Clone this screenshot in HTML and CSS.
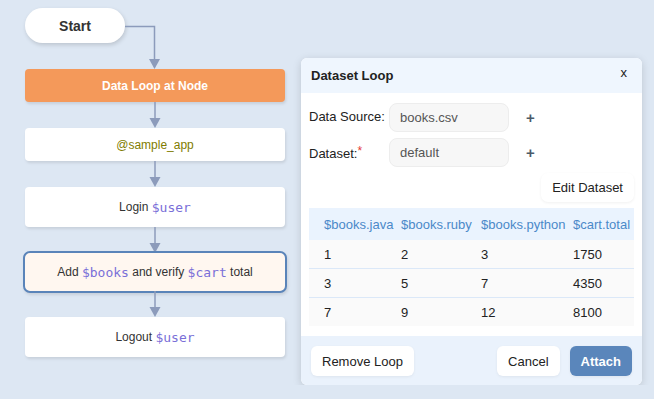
FILE: index.html
```html
<!DOCTYPE html>
<html lang="en">
<head>
  <meta charset="UTF-8">
  <meta name="viewport" content="width=device-width, initial-scale=1.0">
  <title>Dataset Loop</title>
  <link rel="stylesheet" href="styles.css">
</head>
<body>
  <div class="canvas">
    <section class="flow">
      <div class="start-row">
        <div class="start">Start</div>
        <svg class="elbow" width="36" height="61" viewBox="0 0 36 61">
          <path d="M0 18.5H29.5V52" fill="none" stroke="#8c9bbb" stroke-width="1.5"/>
          <path d="M24 51H35L29.5 61Z" fill="#8c9bbb"/>
        </svg>
      </div>
      <div class="node node-loop">Data Loop at Node</div>
      <div class="link">
        <svg width="12" height="26" viewBox="0 0 12 26">
          <path d="M6 0V17" stroke="#8c9bbb" stroke-width="1.5"/>
          <path d="M0.5 16H11.5L6 26Z" fill="#8c9bbb"/>
        </svg>
      </div>
      <div class="node node-app">@sample_app</div>
      <div class="link">
        <svg width="12" height="26" viewBox="0 0 12 26">
          <path d="M6 0V17" stroke="#8c9bbb" stroke-width="1.5"/>
          <path d="M0.5 16H11.5L6 26Z" fill="#8c9bbb"/>
        </svg>
      </div>
      <div class="node node-tall">Login&nbsp;<code>$user</code></div>
      <div class="link">
        <svg width="12" height="26" viewBox="0 0 12 26">
          <path d="M6 0V17" stroke="#8c9bbb" stroke-width="1.5"/>
          <path d="M0.5 16H11.5L6 26Z" fill="#8c9bbb"/>
        </svg>
      </div>
      <div class="node node-tall node-active">Add&nbsp;<code>$books</code>&nbsp;and verify&nbsp;<code>$cart</code>&nbsp;total</div>
      <div class="link">
        <svg width="12" height="26" viewBox="0 0 12 26">
          <path d="M6 0V17" stroke="#8c9bbb" stroke-width="1.5"/>
          <path d="M0.5 16H11.5L6 26Z" fill="#8c9bbb"/>
        </svg>
      </div>
      <div class="node node-tall">Logout&nbsp;<code>$user</code></div>
    </section>

    <section class="modal">
      <div class="modal-header">
        <h2>Dataset Loop</h2>
        <button class="close">x</button>
      </div>
      <div class="modal-body">
        <div class="field">
          <label>Data Source:</label>
          <div class="select">books.csv</div>
          <button class="add">+</button>
        </div>
        <div class="field">
          <label>Dataset:<span class="req">*</span></label>
          <div class="select">default</div>
          <button class="add">+</button>
        </div>
        <div class="edit-row">
          <button class="btn">Edit Dataset</button>
        </div>
        <table class="data">
          <colgroup>
            <col class="c1"><col class="c2"><col class="c3"><col>
          </colgroup>
          <thead>
            <tr><th>$books.java</th><th>$books.ruby</th><th>$books.python</th><th>$cart.total</th></tr>
          </thead>
          <tbody>
            <tr><td>1</td><td>2</td><td>3</td><td>1750</td></tr>
            <tr><td>3</td><td>5</td><td>7</td><td>4350</td></tr>
            <tr><td>7</td><td>9</td><td>12</td><td>8100</td></tr>
          </tbody>
        </table>
      </div>
      <div class="modal-footer">
        <button class="btn">Remove Loop</button>
        <div class="right">
          <button class="btn">Cancel</button>
          <button class="btn btn-primary">Attach</button>
        </div>
      </div>
    </section>
  </div>
</body>
</html>
```

FILE: styles.css
```css
body {
  margin: 0;
  font-family: 'Liberation Sans', Arial, sans-serif;
  background: #dde7f3;
  color: #222;
}

.canvas {
  display: flex;
  align-items: flex-start;
  gap: 16px;
  padding: 8px 0 0 25px;
}

/* flow chart */
.flow {
  width: 260px;
  display: flex;
  flex-direction: column;
}

.start-row {
  display: flex;
  align-items: flex-start;
  height: 61px;
}

.start {
  width: 100px;
  height: 35px;
  border-radius: 18px;
  background: #fff;
  box-shadow: 1px 2px 4px rgba(0, 0, 0, 0.15);
  display: flex;
  align-items: center;
  justify-content: center;
  font-size: 14px;
  font-weight: bold;
  color: #333;
}

.elbow {
  display: block;
}

.node {
  height: 33px;
  box-sizing: border-box;
  border-radius: 4px;
  background: #fff;
  box-shadow: 1px 2px 3px rgba(0, 0, 0, 0.1);
  display: flex;
  align-items: center;
  justify-content: center;
  font-size: 12px;
  color: #333;
}

.node code {
  font-family: 'DejaVu Sans Mono', monospace;
  font-size: 13px;
  color: #7a6fd8;
}

.node-loop {
  background: #f4995a;
  color: #fff;
  font-weight: bold;
}

.node-app {
  color: #7f7c00;
}

.node-tall {
  height: 40px;
}

.node-active {
  height: 42px;
  margin: -2px -2px;
  border: 2px solid #5a84b9;
  border-radius: 7px;
  background: #fff7f0;
}

.link {
  height: 26px;
  display: flex;
  justify-content: center;
}

.link svg {
  display: block;
}

/* modal */
.modal {
  width: 341px;
  margin-top: 50px;
  background: #fff;
  border-radius: 6px;
  overflow: hidden;
  box-shadow: 0 2px 8px rgba(0, 0, 0, 0.15);
}

.modal-header {
  height: 35px;
  padding: 0 10px;
  background: #eff6fe;
  display: flex;
  align-items: center;
  justify-content: space-between;
}

.modal-header h2 {
  margin: 0;
  font-size: 13px;
  font-weight: bold;
  color: #222;
}

button {
  font-family: inherit;
  font-size: 13px;
  color: #222;
  border: none;
  background: none;
  padding: 0;
  cursor: pointer;
}

.close {
  margin: -6px 5px 0 0;
  font-size: 13px;
}

.modal-body {
  padding: 10px 8px;
}

.field {
  display: flex;
  align-items: center;
  height: 29px;
  margin-bottom: 6px;
  font-size: 13px;
}

.field label {
  width: 80px;
  align-self: flex-start;
  padding-top: 6px;
}

.req {
  color: #e53935;
  vertical-align: 3px;
  font-size: 12px;
}

.select {
  width: 120px;
  height: 29px;
  box-sizing: border-box;
  padding-left: 10px;
  display: flex;
  align-items: center;
  background: #f7f7f7;
  border: 1px solid #ededed;
  border-radius: 8px;
  color: #555;
}

.add {
  margin-left: 17px;
  font-size: 15px;
  font-weight: bold;
  color: #4c5a68;
}

.edit-row {
  display: flex;
  justify-content: flex-end;
}

.btn {
  height: 29px;
  padding: 0 11px;
  background: #fff;
  border-radius: 7px;
  box-shadow: 0 1px 3px rgba(0, 0, 0, 0.06);
}

.data {
  width: 100%;
  margin-top: 6px;
  border-collapse: collapse;
  table-layout: fixed;
  font-size: 13px;
}

.data .c1 { width: 92px; }
.data .c2 { width: 80px; }
.data .c3 { width: 92px; }

.data th,
.data td {
  padding: 0;
  text-align: left;
  white-space: nowrap;
}

.data th:first-child,
.data td:first-child {
  padding-left: 15px;
}

.data th {
  height: 32px;
  background: #eaf3fe;
  color: #4a89c9;
  font-weight: normal;
}

.data td {
  height: 28px;
  background: #fafafa;
  border-bottom: 1px solid #dbe8f8;
}

.data tr:last-child td {
  border-bottom: none;
}

.modal-footer {
  height: 49px;
  box-sizing: border-box;
  padding: 10px;
  background: #eaf2fc;
  display: flex;
  align-items: flex-start;
  justify-content: space-between;
}

.modal-footer .btn {
  height: 30px;
  border-radius: 6px;
}

.right {
  display: flex;
  gap: 10px;
}

.btn-primary {
  background: #5a86bb;
  color: #fff;
  font-weight: bold;
}
```
